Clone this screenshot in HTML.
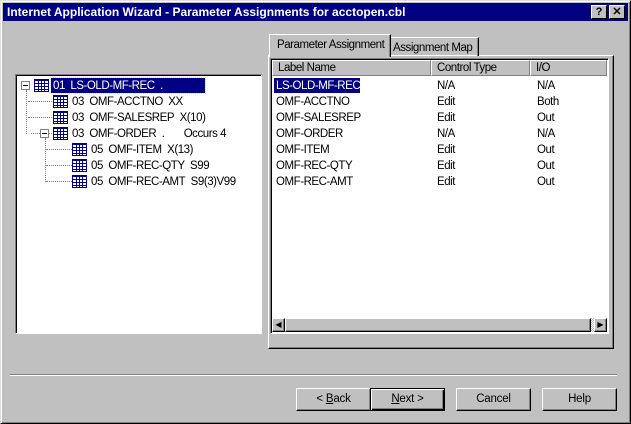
<!DOCTYPE html>
<html><head><style>
*{margin:0;padding:0;box-sizing:border-box}
body{width:631px;height:424px;background:#c0c0c0;font-family:"Liberation Sans",sans-serif;font-size:11px;position:relative;overflow:hidden}
.a{position:absolute}
.win{left:0;top:0;width:631px;height:424px;border:1px solid;border-color:#dfdfdf #000 #000 #dfdfdf;box-shadow:inset 1px 1px #fff,inset -1px -1px #808080}
.title{left:3px;top:3px;width:625px;height:18px;background:#000080;color:#fff;font-weight:bold;font-size:12px;line-height:18px;padding-left:4px}
.tb{top:5px;width:16px;height:14px;background:#c0c0c0;border:1px solid;border-color:#fff #000 #000 #fff;color:#000;font-weight:bold;text-align:center;line-height:12px;font-size:11px}
.sunk{border:1px solid;border-color:#808080 #fff #fff #808080;box-shadow:inset 1px 1px #000}
.raised{border:1px solid;border-color:#fff #000 #000 #fff;box-shadow:inset -1px -1px #808080}
.btn{top:388px;height:23px;width:75px;text-align:center;line-height:21px;font-size:11.5px;letter-spacing:-0.2px;background:#c0c0c0}
.t{position:absolute;white-space:nowrap;font-size:11.5px;line-height:14px;letter-spacing:-0.45px}
.ic{position:absolute;width:15px;height:13px;border:1px solid #000080;background:repeating-linear-gradient(#000080 0 1px,#fff 1px 3px);}
.ic:after{content:"";position:absolute;left:3px;top:0;width:1px;height:11px;background:#000080;box-shadow:3px 0 #000080,6px 0 #000080}
.dot{position:absolute;border-color:#808080;border-style:dotted;border-width:0}
.pm{position:absolute;width:9px;height:9px;border:1px solid #808080;background:#fff}
.pm:after{content:"";position:absolute;left:1px;top:3px;width:5px;height:1px;background:#000}
.hd{top:60px;height:16px;background:#c0c0c0;border:1px solid;border-color:#fff #808080 #808080 #fff;line-height:14px;padding-left:5px;font-size:11.5px;letter-spacing:-0.45px;white-space:nowrap}
</style></head><body>
<div class="a win"></div>
<div class="a title">Internet Application Wizard - Parameter Assignments for acctopen.cbl</div>
<div class="a tb" style="left:591px">?</div>
<div class="a tb" style="left:609px">✕</div>

<div class="a sunk" style="left:15px;top:74px;width:247px;height:260px;background:#fff"></div>
<div class="dot" style="left:26px;top:90px;height:44px;border-left-width:1px"></div>
<div class="dot" style="left:28px;top:101px;width:24px;border-top-width:1px"></div>
<div class="dot" style="left:28px;top:117px;width:24px;border-top-width:1px"></div>
<div class="dot" style="left:31px;top:133px;width:21px;border-top-width:1px"></div>
<div class="dot" style="left:45px;top:138px;height:44px;border-left-width:1px"></div>
<div class="dot" style="left:46px;top:149px;width:26px;border-top-width:1px"></div>
<div class="dot" style="left:46px;top:165px;width:26px;border-top-width:1px"></div>
<div class="dot" style="left:46px;top:181px;width:26px;border-top-width:1px"></div>
<div class="pm" style="left:21px;top:81px"></div>
<div class="pm" style="left:40px;top:129px"></div>
<div class="ic" style="left:34px;top:79px"></div>
<div class="ic" style="left:53px;top:95px"></div>
<div class="ic" style="left:53px;top:111px"></div>
<div class="ic" style="left:53px;top:127px"></div>
<div class="ic" style="left:72px;top:143px"></div>
<div class="ic" style="left:72px;top:159px"></div>
<div class="ic" style="left:72px;top:175px"></div>
<div class="a" style="left:51px;top:78px;width:154px;height:15px;background:#000080;outline:1px dotted #ff0"></div>
<div class="t" style="left:53px;top:79px;color:#fff">01&nbsp; LS-OLD-MF-REC&nbsp; .</div>
<div class="t" style="left:72px;top:95px">03&nbsp; OMF-ACCTNO&nbsp; XX</div>
<div class="t" style="left:72px;top:111px">03&nbsp; OMF-SALESREP&nbsp; X(10)</div>
<div class="t" style="left:72px;top:127px">03&nbsp; OMF-ORDER&nbsp; .&nbsp;&nbsp;&nbsp;&nbsp;&nbsp;&nbsp; Occurs 4</div>
<div class="t" style="left:91px;top:143px">05&nbsp; OMF-ITEM&nbsp; X(13)</div>
<div class="t" style="left:91px;top:159px">05&nbsp; OMF-REC-QTY&nbsp; S99</div>
<div class="t" style="left:91px;top:175px">05&nbsp; OMF-REC-AMT&nbsp; S9(3)V99</div>

<div class="a raised" style="left:268px;top:55px;width:346px;height:294px"></div>
<div class="a" style="left:390px;top:37px;width:89px;height:19px;border:1px solid;border-color:#fff #000 transparent transparent;border-bottom:none;box-shadow:inset -1px 0 #808080"><div class="t" style="left:2px;top:3px">Assignment Map</div></div>
<div class="a" style="left:269px;top:34px;width:122px;height:23px;background:#c0c0c0;border:1px solid;border-color:#fff #000 transparent #fff;border-bottom:none;box-shadow:inset -1px 0 #808080"><div class="t" style="left:7px;top:3px">Parameter Assignment</div></div>

<div class="a sunk" style="left:270px;top:58px;width:339px;height:276px;background:#fff"></div>
<div class="a hd" style="left:272px;top:60px;width:159px">Label Name</div>
<div class="a hd" style="left:431px;top:60px;width:99px">Control Type</div>
<div class="a hd" style="left:530px;top:60px;width:77px">I/O</div>
<div class="a" style="left:274px;top:78px;width:86px;height:15px;background:#000080"></div>
<div class="t" style="left:276px;top:79px;color:#fff">LS-OLD-MF-REC</div>
<div class="t" style="left:276px;top:95px">OMF-ACCTNO</div>
<div class="t" style="left:276px;top:111px">OMF-SALESREP</div>
<div class="t" style="left:276px;top:127px">OMF-ORDER</div>
<div class="t" style="left:276px;top:143px">OMF-ITEM</div>
<div class="t" style="left:276px;top:159px">OMF-REC-QTY</div>
<div class="t" style="left:276px;top:175px">OMF-REC-AMT</div>
<div class="t" style="left:437px;top:79px">N/A</div>
<div class="t" style="left:437px;top:95px">Edit</div>
<div class="t" style="left:437px;top:111px">Edit</div>
<div class="t" style="left:437px;top:127px">N/A</div>
<div class="t" style="left:437px;top:143px">Edit</div>
<div class="t" style="left:437px;top:159px">Edit</div>
<div class="t" style="left:437px;top:175px">Edit</div>
<div class="t" style="left:537px;top:79px">N/A</div>
<div class="t" style="left:537px;top:95px">Both</div>
<div class="t" style="left:537px;top:111px">Out</div>
<div class="t" style="left:537px;top:127px">N/A</div>
<div class="t" style="left:537px;top:143px">Out</div>
<div class="t" style="left:537px;top:159px">Out</div>
<div class="t" style="left:537px;top:175px">Out</div>
<div class="a" style="left:272px;top:318px;width:335px;height:14px;background:#c0c0c0"></div>
<div class="a raised" style="left:272px;top:318px;width:13px;height:14px;font-size:8px;line-height:12px;text-align:center">◀</div>
<div class="a raised" style="left:285px;top:318px;width:306px;height:14px;background:#c0c0c0"></div>
<div class="a" style="left:591px;top:318px;width:3px;height:14px;background:repeating-conic-gradient(#fff 0 25%,#c0c0c0 0 50%) 0 0/2px 2px"></div>
<div class="a raised" style="left:594px;top:318px;width:13px;height:14px;font-size:8px;line-height:12px;text-align:center">▶</div>

<div class="a" style="left:10px;top:374px;width:607px;height:2px;border-top:1px solid #808080;border-bottom:1px solid #fff"></div>

<div class="a btn raised" style="left:296px">&lt; <u>B</u>ack</div>
<div class="a btn" style="left:370px;border:1px solid #000;box-shadow:inset 1px 1px #fff,inset -1px -1px #000,inset -2px -2px #808080"><u>N</u>ext &gt;</div>
<div class="a btn raised" style="left:456px">Cancel</div>
<div class="a btn raised" style="left:542px">Help</div>
</body></html>
